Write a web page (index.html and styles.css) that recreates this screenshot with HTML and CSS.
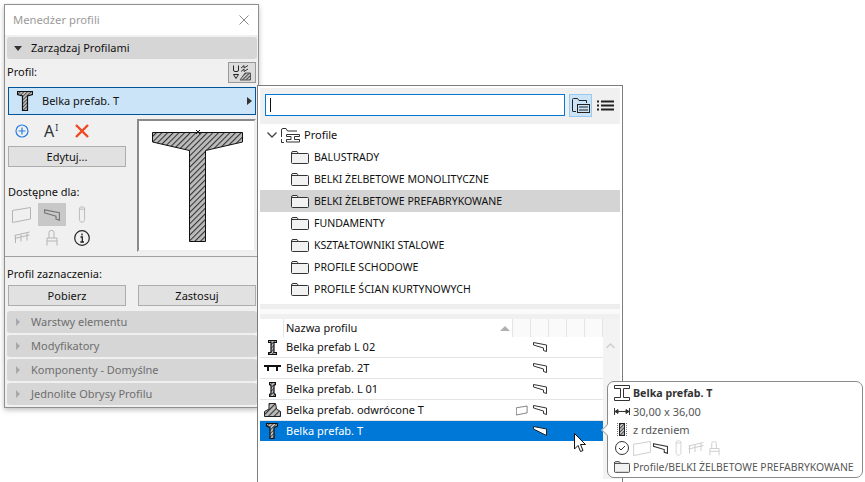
FILE: index.html
```html
<!DOCTYPE html>
<html lang="pl">
<head>
<meta charset="utf-8">
<title>Menedżer profili</title>
<link rel="stylesheet" href="styles.css">
</head>
<body>
<svg class="defs" width="0" height="0">
  <defs>
    <pattern id="hatch" width="4" height="4" patternUnits="userSpaceOnUse" patternTransform="rotate(45)">
      <rect width="4" height="4" fill="#bdbdbd"/><rect width="1.100" height="4" fill="#333"/>
    </pattern>
    <pattern id="hatch-fine" width="2.500" height="2.500" patternUnits="userSpaceOnUse" patternTransform="rotate(45)">
      <rect width="2.500" height="2.500" fill="#c8c8c8"/><rect width="1" height="2.500" fill="#444"/>
    </pattern>
    <symbol id="i-folder" viewBox="0 0 18 13">
      <path d="M.5 11.500V2Q.5.500 2 .500H6L7.500 2.500H16.500Q17.500 2.500 17.500 3.500V11.500Q17.500 12.500 16.500 12.500H1.500Q.5 12.500.5 11.500Z" fill="#f2f2f2" stroke="#333"/>
      <path d="M1 2.500H7.500" stroke="#333" fill="none"/>
    </symbol>
    <symbol id="i-beam" viewBox="0 0 14 10">
      <path d="M.5.500L13.500 3V9.500L10.500 8.500V6L.5 3Z" fill="none" stroke="currentColor"/>
    </symbol>
    <symbol id="i-wall" viewBox="0 0 20 16">
      <path d="M.5 3.500L18.500.5V12L.5 15.500Z" fill="none" stroke="currentColor"/>
    </symbol>
    <symbol id="i-column" viewBox="0 0 8 20">
      <path d="M1 2.500C1 .500 7 .500 7 2.500V16C7 20 1 20 1 16Z M1 2.500C1 4.500 7 4.500 7 2.500" fill="none" stroke="currentColor"/>
    </symbol>
    <symbol id="i-rail" viewBox="0 0 16 12">
      <path d="M.5 4L15.500.5M.5 7L15.500 3.500M1.500 4V11.500M7 3V10M13 1.500V9" fill="none" stroke="currentColor"/>
    </symbol>
    <symbol id="i-chair" viewBox="0 0 12 16">
      <path d="M3 8V2.500Q3 .500 5 .500H6Q8 .500 8 2.500V8M1 15.500V8H11V15.500M1 11H11" fill="none" stroke="currentColor"/>
    </symbol>
  </defs>
</svg>

<div class="stage">
  <section class="manager">
    <header class="manager-title">
      <span>Menedżer profili</span>
      <svg width="10" height="10" viewBox="0 0 10 10"><path d="M.5.500L9.500 9.500M9.500.500L.5 9.500" stroke="#8a8a8a" fill="none"/></svg>
    </header>
    <div class="manager-body">
      <div class="accordion open"><span class="tri-down"></span>Zarządzaj Profilami</div>
      <div class="profile-row">
        <span class="profile-label">Profil:</span>
        <button class="tool-btn" aria-label="Narzędzie">
          <svg width="20" height="16" viewBox="0 0 20 16"><path d="M1.500.500V5Q1.500 6.500 3 6.500H5Q6.500 6.500 6.500 5V.500M1.500 9.500H6.500L4 13.500Z" fill="none" stroke="#222"/><path d="M9 3L12 .500V3L16 .500M9 6.500L12 4V6.500L16 4" fill="none" stroke="#333"/><path d="M8 15L13 8H18.500V15Z" fill="url(#hatch-fine)" stroke="#555"/></svg>
        </button>
      </div>
      <div class="selector">
        <svg class="selector-icon" width="16" height="20" viewBox="0 0 16 20"><path d="M.5.500H15.500V3.500L10.500 5V19.500H5.500V5L.5 3.500Z" fill="url(#hatch-fine)" stroke="#111" stroke-width="1.200"/></svg>
        <span>Belka prefab. T</span>
        <span class="tri-right"></span>
      </div>
      <div class="editor">
        <div class="editor-left">
          <div class="action-icons">
            <svg width="14" height="14" viewBox="0 0 14 14"><circle cx="7" cy="7" r="6" fill="none" stroke="#2a7de1" stroke-width="1.200"/><path d="M7 3.500V10.500M3.500 7H10.500" stroke="#2a7de1" stroke-width="1.200"/></svg>
            <span class="rename"><span>A</span><span class="rename-i">I</span></span>
            <svg class="act-del" width="14" height="14" viewBox="0 0 14 14"><path d="M1 1L13 13M13 1L1 13" stroke="#f0481f" stroke-width="2.400"/></svg>
          </div>
          <button class="btn btn-edit">Edytuj...</button>
          <div class="avail-label">Dostępne dla:</div>
          <div class="avail-grid">
            <span class="avail"><svg width="20" height="16"><use href="#i-wall"/></svg></span>
            <span class="avail on"><svg width="16" height="12"><use href="#i-beam"/></svg></span>
            <span class="avail"><svg width="8" height="17"><use href="#i-column"/></svg></span>
            <span class="avail"><svg width="16" height="13"><use href="#i-rail"/></svg></span>
            <span class="avail"><svg width="12" height="16"><use href="#i-chair"/></svg></span>
            <span class="avail"><svg width="16" height="16" viewBox="0 0 16 16"><circle cx="8" cy="8" r="7.300" fill="none" stroke="#222" stroke-width="1.200"/><path d="M8 3.500V5.500M6.500 7H8.300V12M6.300 12H10" fill="none" stroke="#222" stroke-width="1.300"/></svg></span>
          </div>
        </div>
        <div class="preview">
          <svg width="115" height="129" viewBox="0 0 115 129">
            <path d="M13.500 11.500H103.500V21L66.500 29.500V120.500H50.500V29.500L13.500 21Z" fill="url(#hatch)" stroke="#111"/>
            <path d="M57 9L61 13M61 9L57 13" stroke="#111" fill="none"/>
          </svg>
        </div>
      </div>
      <div class="selection">
        <div class="selection-label">Profil zaznaczenia:</div>
        <div class="selection-btns">
          <button class="btn">Pobierz</button>
          <button class="btn">Zastosuj</button>
        </div>
      </div>
      <div class="accordions">
        <div class="accordion closed"><span class="tri-small"></span>Warstwy elementu</div>
        <div class="accordion closed"><span class="tri-small"></span>Modyfikatory</div>
        <div class="accordion closed"><span class="tri-small"></span>Komponenty - Domyślne</div>
        <div class="accordion closed"><span class="tri-small"></span>Jednolite Obrysy Profilu</div>
      </div>
    </div>
  </section>

  <section class="picker">
    <div class="search-bar">
      <div class="search"><span class="caret"></span></div>
      <button class="view-btn active" aria-label="Drzewo">
        <svg width="20" height="17" viewBox="0 0 20 17"><path d="M1.500 14V2.500Q1.500 1.500 2.500 1.500H6.500L8 3.500H15.500V6" fill="none" stroke="#222"/><path d="M1.500 14.500H5" fill="none" stroke="#222"/><rect x="6.500" y="7.500" width="12" height="8" fill="none" stroke="#222"/><path d="M8 10H17M8 13H17" stroke="#222"/></svg>
      </button>
      <button class="view-btn" aria-label="Lista">
        <svg width="17" height="11" viewBox="0 0 17 11"><path d="M0 1.500H2M4 1.500H17M0 5.500H2M4 5.500H17M0 9.500H2M4 9.500H17" stroke="#222" stroke-width="2"/></svg>
      </button>
    </div>
    <div class="tree">
      <div class="tree-root">
        <svg class="chev" width="10" height="6" viewBox="0 0 10 6"><path d="M.5.500L5 5L9.500.500" fill="none" stroke="#444" stroke-width="1.300"/></svg>
        <svg width="19" height="15" viewBox="0 0 19 15"><path d="M.5 9V2Q.5.500 2 .500H5L6.500 3H16" fill="none" stroke="#333"/><path d="M.5 11V14.500H3" fill="none" stroke="#333"/><path d="M5.500 6.500H18.500V8.500H13.500V11.500H18.500V14H5.500V11.500H10V8.500H5.500Z" fill="none" stroke="#333"/></svg>
        <span>Profile</span>
      </div>
      <div class="tree-item"><svg width="18" height="13"><use href="#i-folder"/></svg>BALUSTRADY</div>
      <div class="tree-item"><svg width="18" height="13"><use href="#i-folder"/></svg>BELKI ŻELBETOWE MONOLITYCZNE</div>
      <div class="tree-item selected"><svg width="18" height="13"><use href="#i-folder"/></svg>BELKI ŻELBETOWE PREFABRYKOWANE</div>
      <div class="tree-item"><svg width="18" height="13"><use href="#i-folder"/></svg>FUNDAMENTY</div>
      <div class="tree-item"><svg width="18" height="13"><use href="#i-folder"/></svg>KSZTAŁTOWNIKI STALOWE</div>
      <div class="tree-item"><svg width="18" height="13"><use href="#i-folder"/></svg>PROFILE SCHODOWE</div>
      <div class="tree-item"><svg width="18" height="13"><use href="#i-folder"/></svg>PROFILE ŚCIAN KURTYNOWYCH</div>
    </div>
    <div class="splitter"></div>
    <div class="list">
      <div class="list-main">
        <div class="list-head">
          <span class="col-icon"></span>
          <span class="col-name">Nazwa profilu<span class="sort"></span></span>
          <span class="col-s"></span><span class="col-s"></span><span class="col-s"></span><span class="col-s"></span><span class="col-s"></span>
        </div>
        <div class="list-row">
          <span class="col-icon"><svg width="9" height="15" viewBox="0 0 9 15"><path d="M.5.500H8.500V2.500H6V12.500H8.500V14.500H.5V12.500H3V2.500H.5Z" fill="url(#hatch-fine)" stroke="#111" stroke-width="1.200"/></svg></span>
          <span class="col-name">Belka prefab L 02</span>
          <span class="col-s"></span><span class="col-s"><svg width="14" height="10"><use href="#i-beam"/></svg></span>
        </div>
        <div class="list-row">
          <span class="col-icon"><svg width="17" height="6" viewBox="0 0 17 6"><path d="M0 0H17V2H14V6H12V2H5V6H3V2H0Z" fill="#111"/></svg></span>
          <span class="col-name">Belka prefab. 2T</span>
          <span class="col-s"></span><span class="col-s"><svg width="14" height="10"><use href="#i-beam"/></svg></span>
        </div>
        <div class="list-row">
          <span class="col-icon"><svg width="7" height="15" viewBox="0 0 7 15"><path d="M.5.500H6.500V2.500L5 3.500V11.500L6.500 12.500V14.500H.5V12.500L2 11.500V3.500L.5 2.500Z" fill="url(#hatch-fine)" stroke="#111" stroke-width="1.200"/></svg></span>
          <span class="col-name">Belka prefab. L 01</span>
          <span class="col-s"></span><span class="col-s"><svg width="14" height="10"><use href="#i-beam"/></svg></span>
        </div>
        <div class="list-row">
          <span class="col-icon"><svg width="17" height="14" viewBox="0 0 17 14"><path d="M.5 13.500V8.500L5 6V.500H11.500L12.500 6L16.500 8.500V13.500Z" fill="url(#hatch)" stroke="#222"/></svg></span>
          <span class="col-name">Belka prefab. odwrócone T</span>
          <span class="col-s"><svg width="12" height="11"><use href="#i-wall"/></svg></span><span class="col-s"><svg width="14" height="10"><use href="#i-beam"/></svg></span>
        </div>
        <div class="list-row active">
          <span class="col-icon"><svg width="12" height="16" viewBox="0 0 12 16"><path d="M.5.500H11.500V3L8 4.500V15.500H4V4.500L.5 3Z" fill="url(#hatch-fine)" stroke="#111" stroke-width="1.200"/></svg></span>
          <span class="col-name">Belka prefab. T</span>
          <span class="col-s"></span><span class="col-s"><svg width="14" height="10" viewBox="0 0 14 10"><path d="M.5.500L13.500 3V9.500L.5 3Z" fill="#fff" stroke="#222"/></svg></span>
        </div>
      </div>
      <div class="scrollbar">
        <svg width="9" height="6" viewBox="0 0 9 6"><path d="M.5 5L4.500 1L8.500 5" fill="none" stroke="#cfcfcf" stroke-width="1.500"/></svg>
      </div>
    </div>
    <svg class="cursor" width="13" height="20" viewBox="0 0 13 20"><path d="M.5.500V16L4 12.500L6.500 18.500L9 17.500L6.500 11.500H11.500Z" fill="#fff" stroke="#111"/></svg>
  </section>

  <aside class="tooltip">
    <span class="tooltip-arrow"></span>
    <div class="tip-row tip-name">
      <svg width="16" height="16" viewBox="0 0 16 16"><path d="M.5.500H15.500V3.500H9.500V12.500H15.500V15.500H.5V12.500H6.500V3.500H.5Z" fill="none" stroke="#333"/></svg>
      <b>Belka prefab. T</b>
    </div>
    <div class="tip-row">
      <svg width="16" height="7" viewBox="0 0 16 7"><path d="M.5 0V7M15.500 0V7M1 3.500H15M1 3.500L4 1.500V5.500ZM15 3.500L12 1.500V5.500Z" fill="#333" stroke="#333"/></svg>
      <span>30,00 x 36,00</span>
    </div>
    <div class="tip-row">
      <svg width="16" height="13" viewBox="0 0 16 13"><path d="M3.500 0V13M12.500 0V13" stroke="#777" stroke-dasharray="1 1" fill="none"/><rect x="5.500" y=".5" width="5" height="12" fill="url(#hatch-fine)" stroke="#222"/></svg>
      <span>z rdzeniem</span>
    </div>
    <div class="tip-row tip-icons">
      <svg class="tip-check" width="14" height="14" viewBox="0 0 14 14"><circle cx="7" cy="7" r="6.500" fill="none" stroke="#333"/><path d="M4 7L6 9L10 5" fill="none" stroke="#333"/></svg>
      <svg class="faint tip-wall" width="19" height="15"><use href="#i-wall"/></svg>
      <svg class="dark tip-beam" width="15" height="11"><use href="#i-beam"/></svg>
      <svg class="faint tip-col" width="7" height="16"><use href="#i-column"/></svg>
      <svg class="faint tip-rail" width="16" height="12"><use href="#i-rail"/></svg>
      <svg class="faint tip-chair" width="11" height="15"><use href="#i-chair"/></svg>
    </div>
    <div class="tip-row tip-path">
      <svg width="16" height="12"><use href="#i-folder"/></svg>
      <span>Profile/BELKI ŻELBETOWE PREFABRYKOWANE</span>
    </div>
  </aside>
</div>
</body>
</html>
```

FILE: styles.css
```css
* { box-sizing: border-box; }
html, body { margin: 0; padding: 0; background: #fff; }
body { font: 11px/14px "Noto Sans", sans-serif; color: #111; width: 865px; height: 482px; overflow: hidden; }
.defs { position: absolute; }
.stage { position: relative; width: 865px; height: 482px; overflow: hidden; }
button { font: inherit; color: inherit; padding: 0; }
svg { flex: none; }

.manager { position: absolute; left: 4px; top: 4px; width: 255px; height: 404px; border: 1px solid #8f8f8f; background: #f0f0f0; box-shadow: 0 2px 5px rgba(0,0,0,.25); display: flex; flex-direction: column; }
.manager-title { height: 30px; flex: none; background: #fff; display: flex; align-items: center; justify-content: space-between; padding: 0 9px 0 8px; font-size: 11.25px; color: #9a9a9a; }
.manager-body { flex: 1; min-height: 0; padding: 2px 1px 0 2px; display: flex; flex-direction: column; }

.accordion { height: 22px; flex: none; background: #d6d6d6; border-radius: 3px; display: flex; align-items: center; }
.accordion.open { padding-left: 7px; }
.accordion.closed { padding-left: 9px; color: #6e6e6e; }
.tri-down { width: 0; height: 0; border: 4px solid transparent; border-top: 5px solid #333; border-bottom: 0; margin-right: 9px; }
.tri-small { width: 0; height: 0; border: 4px solid transparent; border-left: 4px solid #a8a8a8; border-right: 0; margin-right: 11px; }
.tri-right { width: 0; height: 0; border: 4px solid transparent; border-left: 5px solid #333; border-right: 0; margin-left: auto; margin-right: 3px; }

.profile-row { height: 28px; flex: none; display: flex; align-items: center; justify-content: space-between; }
.profile-label { margin-top: -3px; }
.tool-btn { width: 28px; height: 21px; margin: -1px 1px 0 0; background: #dcdcdc; border: 1px solid #999; display: flex; align-items: center; justify-content: center; }

.selector { height: 28px; flex: none; margin: 0 1px; background: #cce4f7; border: 1px solid #005499; display: flex; align-items: center; padding-left: 8px; }
.selector-icon { margin-right: 9px; }

.editor { height: 142px; flex: none; padding: 4px 2px 0 3px; border-bottom: 1px solid #a0a0a0; display: flex; justify-content: space-between; margin: 0 -1px 0 -2px; }
.editor-left { width: 118px; }
.action-icons { display: flex; align-items: center; height: 24px; padding-left: 7px; }
.act-del { margin-left: 11px; }
.rename { display: flex; align-items: flex-start; margin-left: 15px; width: 20px; font-size: 16px; line-height: 16px; color: #333; }
.rename-i { font-size: 9px; line-height: 10px; margin-left: 1px; }
.btn { height: 21px; background: #e1e1e1; border: 1px solid #adadad; display: block; }
.btn-edit { width: 118px; margin-top: 3px; }
.avail-label { margin-top: 18px; }
.avail-grid { display: grid; grid-template-columns: repeat(3, 28px); grid-auto-rows: 23px; column-gap: 2px; margin-top: 4px; }
.avail { display: flex; align-items: center; justify-content: center; color: #b4b4b4; }
.avail.on { background: #c8c8c8; color: #777; }
.preview { width: 119px; height: 133px; border: 2px solid #8a8a8a; border-right-color: #eee; border-bottom-color: #eee; background: #fff; display: flex; }

.selection { padding-top: 10px; }
.selection-label { height: 18px; }
.selection-btns { display: flex; justify-content: space-between; padding: 0 1px; }
.selection-btns .btn { width: 118px; }
.accordions { margin-top: 5px; display: flex; flex-direction: column; gap: 2px; }

.picker { position: absolute; left: 257px; top: 85px; width: 366px; height: 400px; border: 1px solid #7d7d7d; background: #fff; }
.search-bar { height: 36px; margin: 2px 2px 0; background: #f0f0f0; display: flex; align-items: flex-start; padding: 6px 0 0 5px; }
.search { width: 300px; height: 22px; background: #fff; border: 1px solid #0078d7; display: flex; align-items: center; padding-left: 4px; margin-right: 4px; }
.caret { width: 1px; height: 14px; background: #111; }
.view-btn { width: 23px; height: 23px; background: transparent; border: 1px solid transparent; display: flex; align-items: center; justify-content: center; }
.view-btn.active { background: #cce4f7; border-color: #99c9ef; margin-right: 2px; }
.tree-root { height: 22px; display: flex; align-items: center; padding-left: 9px; }
.chev { margin-right: 4px; }
.tree-root span { margin-left: 4px; }
.tree-item { height: 22px; display: flex; align-items: center; gap: 5px; margin: 0 2px; padding-left: 31px; font-size: 10.55px; }
.tree-item.selected { background: #d4d4d4; }
.splitter { height: 15px; margin: 4px 2px 0; background: linear-gradient(#eeeeee 0 5px, #fafafa 5px 10px, #f0f0f0 10px); }

.list { margin: 0 2px; display: flex; height: 160px; }
.list-main { width: 343px; flex: none; }
.scrollbar { flex: 1; background: #f3f3f3; display: flex; justify-content: center; align-items: flex-start; padding: 24px 3px 0 0; }
.list-head { height: 18px; display: flex; background: #fff; }
.list-row { height: 21px; display: flex; align-items: center; border-bottom: 1px solid #e4e4e4; }
.list-row.active { background: #0078d7; color: #fff; border-bottom: 0; height: 20px; }
.col-icon { width: 24px; flex: none; display: flex; justify-content: center; align-items: center; }
.col-name { width: 229px; flex: none; padding-left: 2px; position: relative; }
.col-s { width: 18px; flex: none; display: flex; align-items: center; justify-content: center; color: #333; }
.list-head .col-s { border-right: 1px solid #e4e4e4; background: #fafafa; }
.list-head .col-icon { border-right: 1px solid #e4e4e4; }
.list-head .col-name { border-right: 1px solid #e4e4e4; line-height: 18px; }
.sort { position: absolute; right: 2px; top: 7px; width: 0; height: 0; border: 5px solid transparent; border-bottom: 5px solid #b0b0b0; border-top: 0; }
.cursor { position: absolute; left: 316px; top: 347px; }

.tooltip { position: absolute; left: 607px; top: 381px; width: 256px; height: 97px; background: #fff; border: 1px solid #8a8a8a; border-radius: 7px; padding: 2px 6px; display: flex; flex-direction: column; color: #555; }
.tooltip-arrow { position: absolute; left: -5px; top: 44px; width: 8px; height: 8px; background: #fff; border-left: 1px solid #aaa; border-bottom: 1px solid #aaa; transform: rotate(45deg); }
.tip-row { height: 18.4px; flex: none; display: flex; align-items: center; gap: 3px; white-space: nowrap; }
.tip-name b { color: #333; font-size: 10.7px; }
.tip-path { font-size: 10.4px; }
.tip-icons { gap: 0; }
.tip-check { margin-left: 1px; }
.tip-wall { margin-left: 4px; }
.tip-beam { margin-left: 1px; }
.tip-col { margin-left: 7px; }
.tip-rail { margin-left: 6px; }
.tip-chair { margin-left: 5px; }
.faint { color: #ccc; }
.dark { color: #333; }
```
